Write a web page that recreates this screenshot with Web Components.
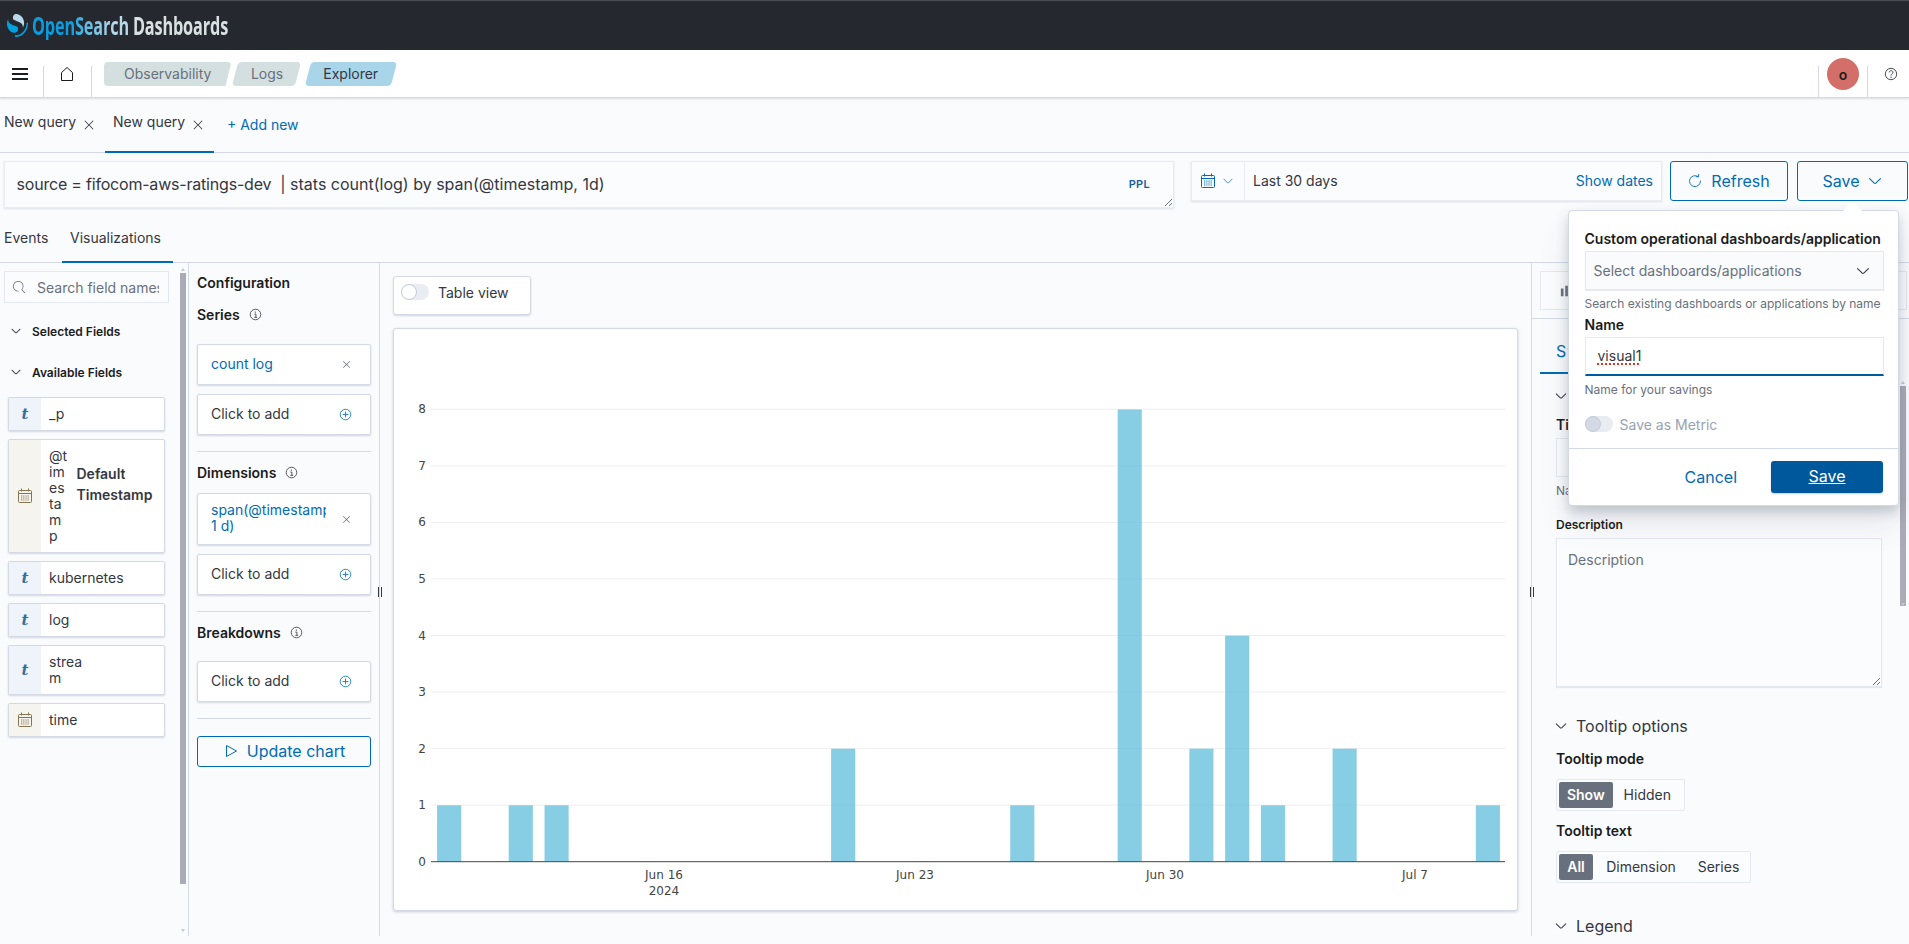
<!DOCTYPE html>
<html>
<head>
<meta charset="utf-8">
<title>Explorer</title>
<style>
  html, body { margin: 0; height: 944px; overflow: hidden; background: #fafbfd; color: #343741; font-family: Inter, "Noto Sans", sans-serif; }
</style>
</head>
<body>
<os-header></os-header>
<os-subnav></os-subnav>
<query-tabs></query-tabs>
<query-bar></query-bar>
<view-tabs></view-tabs>
<explorer-main>
  <fields-panel></fields-panel>
  <config-panel></config-panel>
  <chart-panel></chart-panel>
  <style-panel></style-panel>
</explorer-main>

<script>
const icons = {
  cross: '<path fill="currentColor" d="M7.293 8L3.146 3.854a.5.5 0 11.708-.708L8 7.293l4.146-4.147a.5.5 0 01.708.708L8.707 8l4.147 4.146a.5.5 0 01-.708.708L8 8.707l-4.146 4.147a.5.5 0 01-.708-.708L7.293 8z"/>',
  down: '<path fill="currentColor" d="M13.069 5.157L8.384 9.768a.546.546 0 01-.768 0L2.93 5.158a.552.552 0 00-.771 0 .53.53 0 000 .759l4.684 4.61c.641.631 1.672.63 2.312 0l4.684-4.61a.53.53 0 000-.76.552.552 0 00-.771 0z"/>',
  search: '<path fill="currentColor" d="M11.271 11.978l3.872 3.873a.502.502 0 00.708 0 .502.502 0 000-.708l-3.565-3.564c2.38-2.747 2.267-6.923-.342-9.532-2.73-2.73-7.17-2.73-9.898 0-2.728 2.729-2.728 7.17 0 9.9a6.955 6.955 0 004.949 2.05.5.5 0 000-1 5.96 5.96 0 01-4.242-1.757 6.01 6.01 0 010-8.486c2.337-2.34 6.143-2.34 8.484 0a6.01 6.01 0 010 8.486.5.5 0 00.034.738z"/>',
  plus: '<g fill="none" stroke="currentColor"><circle cx="8" cy="8" r="6.5"/><path d="M8 4.5v7M4.5 8h7"/></g>',
  info: '<g fill="none" stroke="currentColor"><circle cx="8" cy="8" r="6.5"/><path d="M6.5 7.5h2v4M6.5 11.5h3.5"/></g><circle cx="7.8" cy="5" r=".8" fill="currentColor"/>',
  calendar: '<g fill="none" stroke="currentColor"><rect x="1.5" y="2.5" width="13" height="12" rx="1"/><path d="M1.5 5.5h13M4.5 .5v3M11.5 .5v3"/><path stroke-dasharray="1.2 1" d="M4 8h8M4 10h8M4 12h8"/></g>',
  home: '<path fill="none" stroke="currentColor" stroke-linejoin="round" d="M2.5 14.5V6.6L8 1.5l5.5 5.1v7.9z"/>',
  help: '<g fill="none" stroke="currentColor"><circle cx="8" cy="8" r="6.5" /><path d="M5.9 6.2C6 4.9 7 4.2 8.1 4.2c1.2 0 2.1.8 2.1 1.9 0 1.7-2.2 1.8-2.2 3.6"/></g><circle cx="8" cy="11.6" r=".8" fill="currentColor"/>',
  refresh: '<g fill="none" stroke="currentColor" stroke-linecap="round"><path d="M11.5 2.9A6.3 6.3 0 1 0 14.3 8"/><path d="M11.8 .8v2.6H9.2" transform="translate(.2 -.2)"/></g>',
  play: '<path fill="none" stroke="currentColor" stroke-linejoin="round" d="M3.5 2.5L13.5 8l-10 5.5z"/>'
};
const svg = (name, size) => `<svg viewBox="0 0 16 16" width="${size}" height="${size}">${icons[name]}</svg>`;

class OsHeader extends HTMLElement {
  connectedCallback() {
    this.attachShadow({ mode: 'open' }).innerHTML = `
      <style>
        :host { display: flex; align-items: center; box-sizing: border-box; height: 50px; padding-left: 7px; background: #25282f; border-top: 1px solid #4a4c52; }
        svg { display: block; }
        .word { font: 700 25px "Open Sans", sans-serif; line-height: 30px; white-space: nowrap; letter-spacing: -.2px; margin-top: -2px; }
        .brand { display: inline-block; background: linear-gradient(90deg, #0a9ee0 0 40%, #5fb9e2 55%, #b9d9eb 85%); -webkit-background-clip: text; background-clip: text; color: transparent; }
        .product { color: #d9e1e2; }
        .logo { display: flex; gap: 6px; margin-left: 4px; transform: scaleX(.65); transform-origin: left center; }
      </style>
      <svg viewBox="0 0 64 64" width="21" height="23" preserveAspectRatio="none">
        <path fill="#00A3E0" d="M61.7374 23.5C60.4878 23.5 59.4748 24.513 59.4748 25.7626C59.4748 44.3813 44.3813 59.4748 25.7626 59.4748C24.513 59.4748 23.5 60.4878 23.5 61.7374C23.5 62.987 24.513 64 25.7626 64C46.8805 64 64 46.8805 64 25.7626C64 24.513 62.987 23.5 61.7374 23.5Z"/>
        <path fill="#B9D9EB" d="M48.0814 38C50.2572 34.4505 52.3615 29.7178 51.9475 23.0921C51.0899 9.36725 38.6589 -1.04463 26.9206 0.0837327C22.3253 0.525465 17.6068 4.2712 18.026 10.9805C18.2082 13.8961 19.6352 15.6169 21.9544 16.9399C24.1618 18.1992 26.9978 18.9969 30.2128 19.9011C34.0962 20.9934 38.6009 22.2203 42.063 24.7717C46.2125 27.8295 49.0491 31.3743 48.0814 38Z"/>
        <path fill="#00A3E0" d="M3.91861 14C1.74276 17.5495 -0.361506 22.2822 0.0524931 28.9079C0.910072 42.6327 13.3411 53.0446 25.0794 51.9163C29.6747 51.4745 34.3932 47.7288 33.974 41.0195C33.7918 38.1039 32.3647 36.3831 30.0456 35.0601C27.8382 33.8008 25.0022 33.0031 21.7872 32.0989C17.9038 31.0066 13.3991 29.7797 9.93694 27.2283C5.78746 24.1704 2.95092 20.6257 3.91861 14Z"/>
      </svg>
      <div class="logo"><span class="word brand">OpenSearch</span><span class="word product">Dashboards</span></div>`;
  }
}

class OsSubnav extends HTMLElement {
  connectedCallback() {
    this.attachShadow({ mode: 'open' }).innerHTML = `
      <style>
        :host { display: flex; box-sizing: border-box; height: 48px; background: #fff; border-bottom: 1px solid #d3dae6; box-shadow: 0 1px 2px rgba(152,162,179,.35); position: relative; font-size: 14px; }
        .cell { display: flex; align-items: center; justify-content: center; margin-top: 16px; height: 32px; border-right: 1px solid #d3dae6; box-sizing: border-box; }
        .cell > * { margin-top: -16px; }
        .menu { width: 44px; padding-right: 4px; }
        .home { width: 48px; color: #1a1c21; padding-right: 2px; }
        .crumbs { display: flex; margin: 12px 0 0 12px; height: 24px; flex: 1; }
        .crumb { position: relative; height: 24px; line-height: 24px; padding: 0 20px; color: #69707d; z-index: 0; }
        .crumb::before { content: ""; position: absolute; inset: 0; background: #d3e0df; border-radius: 4px; transform: skewX(-15deg); z-index: -1; }
        .crumb.first::before { transform: none; clip-path: polygon(0 0, 100% 0, calc(100% - 6px) 100%, 0 100%); }
        .crumb.logs { margin-left: 4px; padding: 0 15.5px; }
        .crumb.last { margin-left: 9px; color: #343741; padding: 0 15.5px; }
        .crumb.last::before { background: #a9d5e9; }
        .avatar-cell { width: 50px; border-left: 1px solid #d3dae6; }
        .avatar { width: 32px; height: 32px; border-radius: 50%; background: #d36f68; color: #1a1c21; display: flex; align-items: center; justify-content: center; font: 600 14px Inter, sans-serif; }
        .help { width: 41px; border-right: 0; color: #343741; padding-left: 5px; }
      </style>
      <div class="cell menu"><svg viewBox="0 0 16 12" width="16" height="12"><path fill="#1a1c21" d="M0 0h16v2H0zM0 5h16v2H0zM0 10h16v2H0z"/></svg></div>
      <div class="cell home">${svg('home', 16)}</div>
      <div class="crumbs">
        <span class="crumb first">Observability</span>
        <span class="crumb logs">Logs</span>
        <span class="crumb last">Explorer</span>
      </div>
      <div class="cell avatar-cell"><div class="avatar">o</div></div>
      <div class="cell help">${svg('help', 14)}</div>`;
  }
}

class QueryTabs extends HTMLElement {
  connectedCallback() {
    this.attachShadow({ mode: 'open' }).innerHTML = `
      <style>
        :host { display: flex; box-sizing: border-box; height: 55px; border-bottom: 1px solid #d3dae6; font-size: 14px; }
        .tab { display: flex; flex: none; gap: 6px; box-sizing: border-box; width: 109px; height: 55px; padding: 15px 8px 0; border-bottom: 2px solid transparent; white-space: nowrap; }
        .tab.first { width: 105px; padding-left: 4px; }
        .tab.on { border-bottom-color: #006bb4; }
        .tab svg { margin-top: 5px; color: #343741; }
        .tab span { line-height: 17px; }
        .add { color: #006bb4; margin: 18px 0 0 13px; line-height: 17px; }
      </style>
      <div class="tab first"><span>New query</span>${svg('cross', 14)}</div>
      <div class="tab on"><span>New query</span>${svg('cross', 14)}</div>
      <div class="add">+ Add new</div>`;
  }
}

class SavePopover extends HTMLElement {
  connectedCallback() {
    this.attachShadow({ mode: 'open' }).innerHTML = `
      <style>
        :host { display: block; position: absolute; left: 1567.5px; top: 210px; width: 331.5px; box-sizing: border-box; background: #fff; border: 1px solid #d3dae6; border-radius: 4px; box-shadow: 0 6px 12px rgba(65,78,101,.25), 0 20px 30px rgba(65,78,101,.1); z-index: 5; font-size: 14px; }
        .arrow { position: absolute; left: 277px; top: -7px; width: 13px; height: 13px; background: #fff; transform: rotate(45deg); }
        .body { padding: 19px 16px 0; }
        b { display: block; font-weight: 600; color: #1a1c21; line-height: 17px; }
        .select { display: flex; align-items: center; justify-content: space-between; box-sizing: border-box; height: 39px; margin-top: 4px; padding: 0 12px 0 8px; background: #fafbfd; border: 1px solid #e4e8f0; box-shadow: 0 1px 1px rgba(152,162,179,.2); color: #69707d; width: 299px; }
        .select svg { color: #343741; }
        .hint { font-size: 12px; color: #69707d; line-height: 15px; }
        .name { display: flex; align-items: center; box-sizing: border-box; height: 39px; margin-top: 4px; padding: 0 12px 2px; width: 299px; background: #fff; border: 1px solid #e4e8f0; border-bottom: 2px solid #005a9e; color: #343741; }
        .name span { text-decoration: underline dotted #e0322b 1.5px; text-underline-offset: 3px; }
        .metric { display: flex; align-items: center; gap: 7px; margin-top: 17px; color: #98a2b3; height: 20px; }
        .toggle { position: relative; width: 28px; height: 16px; border-radius: 8px; background: #e9edf3; }
        .toggle i { position: absolute; left: 0; top: 0; width: 16px; height: 16px; box-sizing: border-box; border-radius: 50%; background: #d3dae6; border: 1px solid #c4cad6; }
        .foot { display: flex; align-items: center; justify-content: flex-end; gap: 34px; margin-top: 14px; height: 56px; border-top: 1px solid #d3dae6; padding-right: 15px; font-size: 16px; }
        .cancel { color: #006bb4; }
        .save { width: 112px; height: 32px; line-height: 31px; text-align: center; background: #00589c; color: #fff; border-radius: 3px; text-decoration: underline; box-shadow: 0 1px 2px rgba(0,0,0,.2); }
      </style>
      <div class="arrow"></div>
      <div class="body">
        <b>Custom operational dashboards/application</b>
        <div class="select"><span>Select dashboards/applications</span>${svg('down', 16)}</div>
        <div class="hint" style="margin-top:6px">Search existing dashboards or applications by name</div>
        <b style="margin-top:5px">Name</b>
        <div class="name"><span>visual1</span></div>
        <div class="hint" style="margin-top:6px">Name for your savings</div>
        <div class="metric"><div class="toggle"><i></i></div><span>Save as Metric</span></div>
      </div>
      <div class="foot"><span class="cancel">Cancel</span><span class="save">Save</span></div>`;
  }
}

class QueryBar extends HTMLElement {
  connectedCallback() {
    this.attachShadow({ mode: 'open' }).innerHTML = `
      <style>
        :host { display: flex; align-items: flex-start; height: 47px; margin-top: 8px; padding-left: 4px; font-size: 14px; }
        .editor { position: relative; display: flex; align-items: center; justify-content: space-between; box-sizing: border-box; width: 1170px; height: 47px; padding: 0 23px 2px 11.5px; background: #fbfcfd; border: 1px solid #e9edf3; box-shadow: 0 1px 2px rgba(152,162,179,.3); font-size: 16px; }
        .editor span { white-space: pre; }
        .editor i { font-style: normal; letter-spacing: -.2px; }
        .ppl { font: 600 11px Inter, sans-serif; color: #1a5c9c; letter-spacing: .3px; }
        .grip { position: absolute; right: 1px; bottom: 1px; }
        .date { display: flex; align-items: center; box-sizing: border-box; width: 471px; height: 39.5px; margin-left: 17px; background: #fbfcfd; border: 1px solid #e9edf3; box-shadow: 0 1px 2px rgba(152,162,179,.3); }
        .cal { display: flex; align-items: center; gap: 6px; box-sizing: border-box; width: 53px; height: 100%; padding-left: 8px; border-right: 1px solid #e9edf3; color: #006bb4; }
        .cal .d { color: #69a2cf; display: flex; }
        .range { margin-left: 8px; flex: 1; }
        .show { color: #006bb4; margin-right: 8px; }
        .btn { display: flex; align-items: center; justify-content: center; box-sizing: border-box; height: 39.5px; border: 1.5px solid #006bb4; border-radius: 3px; color: #006bb4; font-size: 16px; background: #fafbfd; }
        .refresh { width: 118px; margin-left: 8px; gap: 9px; }
        .save { width: 111px; margin-left: 9px; gap: 7px; }
      </style>
      <div class="editor"><span><i>source = fifocom-aws-ratings-dev</i>  | stats count(log) by span(@timestamp, 1d)</span><span class="ppl">PPL</span>
        <svg class="grip" viewBox="0 0 8 8" width="8" height="8"><path stroke="#69707d" d="M1 8L8 1M5 8l3-3"/></svg>
      </div>
      <div class="date">
        <div class="cal">${svg('calendar', 16)}<span class="d">${svg('down', 12)}</span></div>
        <span class="range">Last 30 days</span><span class="show">Show dates</span>
      </div>
      <div class="btn refresh">${svg('refresh', 14)}<span>Refresh</span></div>
      <div class="btn save"><span>Save</span>${svg('down', 16)}</div>
      <save-popover></save-popover>`;
  }
}

class ViewTabs extends HTMLElement {
  connectedCallback() {
    this.attachShadow({ mode: 'open' }).innerHTML = `
      <style>
        :host { display: flex; box-sizing: border-box; height: 55px; border-bottom: 1px solid #d3dae6; font-size: 14px; }
        .t { flex: none; box-sizing: border-box; height: 55px; width: 62px; padding: 21px 0 0 4px; line-height: 17px; border-bottom: 2px solid transparent; }
        .t.on { width: 111px; padding: 21px 0 0 8px; border-bottom-color: #006bb4; }
      </style>
      <div class="t">Events</div><div class="t on">Visualizations</div>`;
  }
}

class ExplorerMain extends HTMLElement {
  connectedCallback() {
    this.attachShadow({ mode: 'open' }).innerHTML = `
      <style>
        :host { display: grid; grid-template-columns: 189px 191px 1152px 1fr; height: 661px; }
      </style>
      <slot></slot>`;
  }
}

class FakeScroll extends HTMLElement {
  connectedCallback() {
    const top = this.getAttribute('top');
    const h = this.getAttribute('size');
    this.attachShadow({ mode: 'open' }).innerHTML = `
      <style>
        :host { display: block; position: relative; width: 6px; height: 100%; }
        .thumb { height: ${h}px; margin-top: ${top}px; background: #a9acb6; }
        .up, .dn { position: absolute; left: 1px; border: 2px solid transparent; }
        .up { top: ${top - 7}px; border-bottom: 3px solid #c5c7cd; }
        .dn { bottom: ${this.getAttribute('bottom')}px; border-top: 3px solid #c5c7cd; }
      </style>
      <div class="up"></div><div class="thumb"></div><div class="dn"></div>`;
  }
}

class FieldCard extends HTMLElement {
  connectedCallback() {
    const kind = this.getAttribute('kind');
    const w = this.getAttribute('wrap');
    const tag = this.getAttribute('tag');
    this.attachShadow({ mode: 'open' }).innerHTML = `
      <style>
        :host { display: flex; box-sizing: border-box; width: 157px; min-height: 33.5px; margin-bottom: 8px; background: #fff; border: 1px solid #d3dae6; border-radius: 2px; box-shadow: 0 1px 2px rgba(152,162,179,.4); font-size: 14px; line-height: 16px; }
        .tok { flex: none; width: 32px; display: flex; align-items: center; justify-content: center; background: ${kind === 'date' ? '#f6f4ee' : '#eef4fa'}; color: ${kind === 'date' ? '#85754f' : '#35709d'}; font: italic 700 15px "DejaVu Serif", serif; }
        .name { align-self: center; margin-left: 8px; padding: 8px 0; ${w ? `width: ${w}px; word-break: break-all;` : ''} }
        .tag { align-self: flex-start; margin: 23px 0 0 8px; width: 74px; font-weight: 600; line-height: 21px; }
      </style>
      <div class="tok">${kind === 'date' ? svg('calendar', 16) : 't'}</div>
      <div class="name"><slot></slot></div>
      ${tag ? `<div class="tag">${tag}</div>` : ''}`;
  }
}

class FieldsPanel extends HTMLElement {
  connectedCallback() {
    this.attachShadow({ mode: 'open' }).innerHTML = `
      <style>
        :host { display: flex; border-right: 1px solid #d3dae6; box-sizing: border-box; }
        .list { box-sizing: border-box; width: 180px; padding: 8px 0 0 4px; }
        .search { display: flex; align-items: center; gap: 12px; box-sizing: border-box; width: 165px; height: 32px; padding-left: 8px; background: #fbfcfd; border: 1px solid #e4e8f0; color: #69707d; font-size: 14px; white-space: nowrap; overflow: hidden; }
        .search span { width: 122px; overflow: hidden; flex: none; }
        .sec { display: flex; align-items: center; gap: 10px; height: 16px; padding-left: 6px; font-size: 12px; font-weight: 600; color: #1a1c21; }
        .sec svg { color: #343741; }
        .cards { margin: 17px 0 0 4px; }
      </style>
      <div class="list">
        <div class="search">${svg('search', 12)}<span>Search field names</span></div>
        <div class="sec" style="margin-top:20px">${svg('down', 12)}<span>Selected Fields</span></div>
        <div class="sec" style="margin-top:25px">${svg('down', 12)}<span>Available Fields</span></div>
        <div class="cards">
          <field-card>_p</field-card>
          <field-card kind="date" wrap="19.5" tag="Default Timestamp">@timestamp</field-card>
          <field-card>kubernetes</field-card>
          <field-card>log</field-card>
          <field-card wrap="40">stream</field-card>
          <field-card kind="date">time</field-card>
        </div>
      </div>
      <fake-scroll top="10" size="611" bottom="2"></fake-scroll>`;
  }
}

class ConfigCard extends HTMLElement {
  connectedCallback() {
    const add = this.hasAttribute('add');
    this.attachShadow({ mode: 'open' }).innerHTML = `
      <style>
        :host { display: flex; align-items: center; box-sizing: border-box; width: 174px; min-height: 41px; margin-bottom: 9px; padding: 0 18px 0 13px; background: #fff; border: 1px solid #d3dae6; border-radius: 2px; box-shadow: 0 1px 2px rgba(152,162,179,.4); font-size: 14px; line-height: 16px; color: ${add ? '#343741' : '#006bb4'}; }
        .txt { flex: 1; min-width: 0; max-width: 115px; overflow: hidden; padding: 8px 0 10px; }
        svg { flex: none; margin-left: auto; color: ${add ? '#006bb4' : '#69707d'}; }
      </style>
      <div class="txt"><slot></slot></div>${svg(add ? 'plus' : 'cross', add ? 13 : 11)}`;
  }
}

class ConfigPanel extends HTMLElement {
  connectedCallback() {
    this.attachShadow({ mode: 'open' }).innerHTML = `
      <style>
        :host { display: block; position: relative; box-sizing: border-box; padding: 11px 0 0 8px; border-right: 1px solid #d3dae6; }
        .title { font-size: 14px; font-weight: 600; color: #1a1c21; line-height: 17px; display: flex; align-items: center; gap: 9px; }
        .title svg { color: #343741; }
        hr { width: 174px; margin: 16px 0 12px; border: 0; border-top: 1px solid #d3dae6; }
        .update { display: flex; align-items: center; justify-content: center; gap: 8px; box-sizing: border-box; width: 174px; height: 31px; margin-top: 17px; padding-bottom: 2px; border: 1px solid #006bb4; border-radius: 3px; color: #006bb4; font-size: 16px; background: #fafbfd; }
        .grip { position: absolute; right: -3px; top: 324px; height: 10px; border-left: 1px solid #343741; border-right: 1px solid #343741; width: 2px; }
      </style>
      <div class="title">Configuration</div>
      <div class="title" style="margin:15px 0 21px">Series ${svg('info', 13)}</div>
      <config-card>count log</config-card>
      <config-card add>Click to add</config-card>
      <hr>
      <div class="title" style="margin:0 0 12px">Dimensions ${svg('info', 13)}</div>
      <config-card>span(@timestamp,<br>1 d)</config-card>
      <config-card add>Click to add</config-card>
      <hr>
      <div class="title" style="margin:0 0 20px">Breakdowns ${svg('info', 13)}</div>
      <config-card add>Click to add</config-card>
      <hr>
      <div class="update">${svg('play', 16)}<span>Update chart</span></div>
      <div class="grip"></div>`;
  }
}

class ChartPanel extends HTMLElement {
  connectedCallback() {
    const bars = [[0,1],[2,1],[3,1],[11,2],[16,1],[19,8],[21,2],[22,4],[23,1],[25,2],[29,1]];
    const x0 = 43, day = 35.82, y0 = 532.7, unit = 56.55;
    const grid = [1,2,3,4,5,6,7,8].map(v => `<line x1="37" x2="1111" y1="${y0 - v * unit}" y2="${y0 - v * unit}" stroke="#eee"/>`).join('');
    const ylab = [0,1,2,3,4,5,6,7,8].map(v => `<text x="32" y="${y0 - v * unit + 4}" text-anchor="end">${v}</text>`).join('');
    const rects = bars.map(([d, v]) => `<rect x="${x0 + d * day}" y="${y0 - v * unit}" width="24.3" height="${v * unit}" fill="#54b9d9" fill-opacity=".7" stroke="#fff" stroke-opacity=".35" stroke-width=".5"/>`).join('');
    const xlab = [['Jun 16', 270], ['Jun 23', 521], ['Jun 30', 771], ['Jul 7', 1021]].map(([t, x]) => `<text x="${x}" y="550" text-anchor="middle">${t}</text>`).join('');
    this.attachShadow({ mode: 'open' }).innerHTML = `
      <style>
        :host { display: block; box-sizing: border-box; padding: 13px 0 0 13px; border-right: 1px solid #d3dae6; }
        .table { display: flex; align-items: flex-start; gap: 9px; box-sizing: border-box; width: 138px; height: 39px; padding: 7px 0 0 7px; background: #fff; border: 1px solid #d3dae6; border-radius: 3px; box-shadow: 0 1px 2px rgba(152,162,179,.4); font-size: 14px; line-height: 17px; }
        .toggle { position: relative; width: 28px; height: 16px; border-radius: 8px; background: #e9edf3; }
        .toggle i { position: absolute; left: 0; top: 0; width: 16px; height: 16px; box-sizing: border-box; border-radius: 50%; background: #fff; border: 1px solid #c4cad6; }
        .card { box-sizing: border-box; width: 1125px; height: 583px; margin-top: 13px; background: #fff; border: 1px solid #d3dae6; border-radius: 3px; box-shadow: 0 1px 3px rgba(152,162,179,.5); }
        svg { display: block; font: 12px "DejaVu Sans", sans-serif; fill: #444; }
      </style>
      <div class="table"><div class="toggle"><i></i></div><span>Table view</span></div>
      <div class="card">
        <svg width="1123" height="581" viewBox="0 0 1123 581">
          ${grid}${rects}
          <line x1="37" x2="1111" y1="${y0}" y2="${y0}" stroke="#444"/>
          ${ylab}${xlab}
          <text x="270" y="566" text-anchor="middle">2024</text>
        </svg>
      </div>`;
  }
}

class StylePanel extends HTMLElement {
  connectedCallback() {
    this.attachShadow({ mode: 'open' }).innerHTML = `
      <style>
        :host { display: block; position: relative; font-size: 14px; }
        .grip { position: absolute; left: -2px; top: 324px; width: 2px; height: 10px; border-left: 1px solid #343741; border-right: 1px solid #343741; z-index: 1; }
        .top { box-sizing: border-box; height: 56px; padding: 8px 2px 0 8px; border-bottom: 1px solid #d3dae6; }
        .combo { display: flex; align-items: center; box-sizing: border-box; height: 39px; padding-left: 19px; background: #fbfcfd; border: 1px solid #e4e8f0; color: #69707d; }
        .wrap { display: flex; }
        .scroll { margin-left: auto; margin-right: 3px; }
        .content { box-sizing: border-box; width: 360px; padding-left: 8px; }
        .tab { box-sizing: border-box; width: 90px; height: 55px; padding: 22px 0 0 16px; border-bottom: 2px solid #006bb4; color: #006bb4; font-size: 16px; line-height: 20px; letter-spacing: 1.5px; }
        .inner { padding-left: 16px; width: 326px; }
        .acc { display: flex; align-items: center; gap: 8px; margin-left: -2px; font-size: 16px; line-height: 20px; color: #343741; height: 20px; }
        .lab { font-weight: 600; color: #1a1c21; line-height: 17px; }
        .small { font-size: 12px; line-height: 15px; }
        .input { box-sizing: border-box; height: 39px; margin-top: 5px; background: #fbfcfd; border: 1px solid #e4e8f0; }
        .hint { margin-top: 6px; font-size: 12px; line-height: 15px; color: #69707d; }
        .area { position: relative; box-sizing: border-box; height: 149px; margin-top: 6px; padding: 12px 11px; background: #fbfcfd; border: 1px solid #e4e8f0; color: #69707d; box-shadow: 0 1px 1px rgba(152,162,179,.2); }
        .area svg { position: absolute; right: 1px; bottom: 1px; }
        .group { display: flex; align-items: center; box-sizing: border-box; height: 32px; margin-top: 12px; padding: 0 2px; background: #fbfcfd; border: 1px solid #e4e8f0; border-radius: 2px; }
        .group span { height: 26px; line-height: 26px; text-align: center; }
        .group .on { background: #69707d; color: #fff; font-weight: 600; border-radius: 2px; }
      </style>
      <div class="grip"></div>
      <div class="top"><div class="combo"><svg viewBox="0 0 16 16" width="14" height="14"><path fill="#69707d" d="M1 14V5h3v9zm5 0V2h3v12zm5 0V7h3v7z"/></svg></div></div>
      <div class="wrap">
        <div class="content">
          <div class="tab">Style</div>
          <div class="inner">
            <div class="acc" style="margin-top:12px">${svg('down', 14)}<span>Panel options</span></div>
            <div class="lab" style="margin-top:10px">Title</div>
            <div class="input"></div>
            <div class="hint">Name your visualization</div>
            <div class="lab small" style="margin-top:19px">Description</div>
            <div class="area">Description<svg viewBox="0 0 8 8" width="8" height="8"><path stroke="#69707d" d="M1 8L8 1M5 8l3-3"/></svg></div>
            <div class="acc" style="margin-top:29px">${svg('down', 14)}<span>Tooltip options</span></div>
            <div class="lab" style="margin-top:14px">Tooltip mode</div>
            <div class="group" style="width:129px"><span class="on" style="width:54px">Show</span><span style="width:70px">Hidden</span></div>
            <div class="lab" style="margin-top:11px">Tooltip text</div>
            <div class="group" style="width:195px"><span class="on" style="width:34px">All</span><span style="width:96px">Dimension</span><span style="width:59px">Series</span></div>
            <div class="acc" style="margin-top:33px">${svg('down', 14)}<span>Legend</span></div>
          </div>
        </div>
        <fake-scroll class="scroll" top="67" size="220" bottom="-2"></fake-scroll>
      </div>`;
  }
}

customElements.define('os-header', OsHeader);
customElements.define('os-subnav', OsSubnav);
customElements.define('query-tabs', QueryTabs);
customElements.define('save-popover', SavePopover);
customElements.define('query-bar', QueryBar);
customElements.define('view-tabs', ViewTabs);
customElements.define('explorer-main', ExplorerMain);
customElements.define('fake-scroll', FakeScroll);
customElements.define('field-card', FieldCard);
customElements.define('fields-panel', FieldsPanel);
customElements.define('config-card', ConfigCard);
customElements.define('config-panel', ConfigPanel);
customElements.define('chart-panel', ChartPanel);
customElements.define('style-panel', StylePanel);
</script>
</body>
</html>
